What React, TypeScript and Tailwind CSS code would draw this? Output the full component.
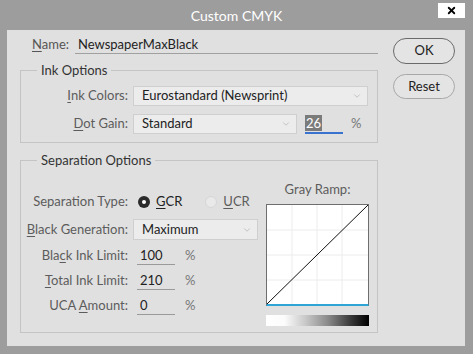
import React from 'react';
import { ChevronDown, X } from 'lucide-react';

const font = { fontFamily: 'Lato, "Noto Sans", sans-serif' };

function Select({ value, width }: { value: string; width: string }) {
  return (
    <div
      className={`${width} h-[20px] flex items-center justify-between pl-[8px] pr-[5px] bg-[#ececec] border border-[#cfcfcf] text-[#222]`}
    >
      <span>{value}</span>
      <ChevronDown className="w-[10px] h-[10px] text-[#a8a8a8]" strokeWidth={1.5} />
    </div>
  );
}

function LimitRow({ label, value }: { label: React.ReactNode; value: string }) {
  return (
    <div className="flex items-center h-[18px]">
      <div className="w-[107px] text-right text-[#5c5c5c] whitespace-nowrap">{label}</div>
      <div className="ml-[9px] w-[38px] h-[18px] border-b border-[#9a9a9a] pl-[3px] leading-[17px] text-[#222]">
        {value}
      </div>
      <span className="ml-[10px] text-[#777]">%</span>
    </div>
  );
}

function GrayRamp() {
  return (
    <div className="w-[103px] flex flex-col items-center">
      <div className="h-[20px] leading-[20px] text-[#5c5c5c] mt-[10px]">Gray Ramp:</div>
      <div className="mt-[5px] w-[103px] h-[102px] bg-white border border-[#6e6e6e] border-b-2 border-b-[#2fa4d6]">
        <svg width="101" height="99" viewBox="0 0 101 99" className="block">
          {[25, 50, 75].map((x) => (
            <line key={'v' + x} x1={x} y1={0} x2={x} y2={99} stroke="#ececec" strokeWidth="1" />
          ))}
          {[25, 50, 75].map((y) => (
            <line key={'h' + y} x1={0} y1={y} x2={101} y2={y} stroke="#ececec" strokeWidth="1" />
          ))}
          <line x1={0} y1={99} x2={101} y2={0} stroke="#111" strokeWidth="1" />
        </svg>
      </div>
      <div className="mt-[9px] w-[103px] h-[11px] bg-[linear-gradient(to_right,#ffffff_0%,#fbfbfb_18%,#c9c9c9_38%,#8a8a8a_60%,#3a3a3a_82%,#000000_100%)]" />
    </div>
  );
}

export default function App() {
  return (
    <div className="w-[473px] h-[354px] bg-[#9d9d9d] flex flex-col text-[13px]" style={font}>
      {/* Title bar */}
      <div className="relative h-[30px] flex items-center justify-center text-white text-[14px]">
        Custom CMYK
        <div className="absolute right-[8px] top-[3px] w-[27px] h-[15px] bg-white flex items-center justify-center">
          <X className="w-[11px] h-[11px] text-black" strokeWidth={4} />
        </div>
      </div>

      {/* Body */}
      <div className="ml-[7px] w-[458px] h-[316px] bg-[#e0e0e0] flex">
        <div className="ml-[13px] w-[358px] flex flex-col">
          {/* Name */}
          <div className="mt-[6px] h-[18px] flex items-center">
            <span className="ml-[12px] text-[#555]">
              <span className="underline underline-offset-2">N</span>ame:
            </span>
            <div className="ml-[6px] flex-1 h-[18px] border-b border-[#a0a0a0] pl-[3px] leading-[17px] text-[#222]">
              NewspaperMaxBlack
            </div>
          </div>

          {/* Ink Options */}
          <fieldset className="mt-[7px] border border-[#c4c4c4] pb-[8px]">
            <legend className="ml-[16px] px-[4px] leading-[18px] text-[#333]">Ink Options</legend>
            <div className="mt-[7px] flex items-center">
              <div className="w-[107px] text-right text-[#5c5c5c] whitespace-nowrap">
                <span className="underline underline-offset-2">I</span>nk Colors:
              </div>
              <div className="ml-[5px]">
                <Select value="Eurostandard (Newsprint)" width="w-[235px]" />
              </div>
            </div>
            <div className="mt-[8px] flex items-center">
              <div className="w-[107px] text-right text-[#5c5c5c] whitespace-nowrap">
                <span className="underline underline-offset-2">D</span>ot Gain:
              </div>
              <div className="ml-[5px]">
                <Select value="Standard" width="w-[164px]" />
              </div>
              <div className="ml-[8px] w-[38px] h-[19px] border-b-2 border-[#3a72cf] flex items-center">
                <span className="bg-[#7b7b7b] text-white leading-[16px] px-[1px]">26</span>
              </div>
              <span className="ml-[8px] text-[#777]">%</span>
            </div>
          </fieldset>

          {/* Separation Options */}
          <fieldset className="mt-[8px] border border-[#c4c4c4] h-[182px]">
            <legend className="ml-[16px] px-[4px] leading-[18px] text-[#333]">Separation Options</legend>
            <div className="flex">
              <div className="flex flex-col">
                <div className="mt-[23px] h-[20px] flex items-center">
                  <div className="w-[107px] text-right text-[#5c5c5c] whitespace-nowrap">Separation Type:</div>
                  <div className="ml-[10px] w-[12px] h-[12px] rounded-full bg-[#2b2b2b] flex items-center justify-center">
                    <div className="w-[4px] h-[4px] rounded-full bg-white" />
                  </div>
                  <span className="ml-[6px] text-[#222]">
                    <span className="underline underline-offset-2">G</span>CR
                  </span>
                  <div className="ml-[23px] w-[12px] h-[12px] rounded-full bg-[#e9e9e9] border border-[#d6d6d6]" />
                  <span className="ml-[6px] text-[#5c5c5c]">
                    <span className="underline underline-offset-2">U</span>CR
                  </span>
                </div>
                <div className="mt-[7px] flex items-center">
                  <div className="w-[107px] text-right text-[#5c5c5c] whitespace-nowrap">
                    <span className="underline underline-offset-2">B</span>lack Generation:
                  </div>
                  <div className="ml-[5px]">
                    <Select value="Maximum" width="w-[125px] h-[21px]" />
                  </div>
                </div>
                <div className="mt-[7px] flex flex-col gap-[7px]">
                  <LimitRow
                    label={
                      <>
                        Bla<span className="underline underline-offset-2">c</span>k Ink Limit:
                      </>
                    }
                    value="100"
                  />
                  <LimitRow
                    label={
                      <>
                        <span className="underline underline-offset-2">T</span>otal Ink Limit:
                      </>
                    }
                    value="210"
                  />
                  <LimitRow
                    label={
                      <>
                        UCA <span className="underline underline-offset-2">A</span>mount:
                      </>
                    }
                    value="0"
                  />
                </div>
              </div>
              <div className="ml-[8px]">
                <GrayRamp />
              </div>
            </div>
          </fieldset>
        </div>

        {/* Buttons */}
        <div className="ml-[15px] mt-[8px] flex flex-col gap-[10px]">
          <button className="w-[62px] h-[26px] rounded-full border border-[#6a6a6a] bg-[#e4e4e4] text-[#222]">
            OK
          </button>
          <button className="w-[62px] h-[25px] rounded-full border border-[#a8a8a8] bg-[#e4e4e4] text-[#222]">
            Reset
          </button>
        </div>
      </div>
    </div>
  );
}
